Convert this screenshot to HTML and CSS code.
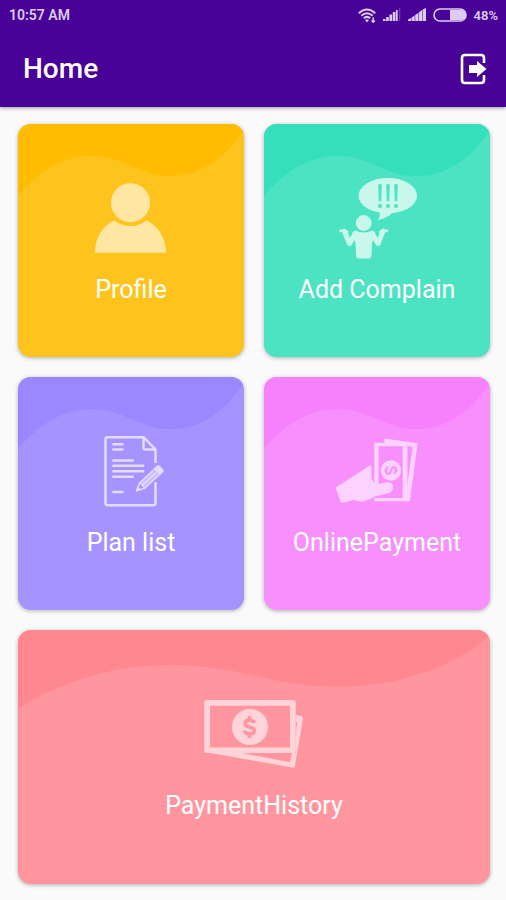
FILE: index.html
```html
<!DOCTYPE html>
<html lang="en">
<head>
<meta charset="utf-8">
<meta name="viewport" content="width=device-width, initial-scale=1">
<title>Home</title>
<link rel="stylesheet" href="styles.css">
</head>
<body>
<header class="header">
  <div class="status">
    <span class="time">10:57 AM</span>
    <div class="status-icons">
      <svg width="18" height="15" viewBox="0 0 18 15" fill="none" stroke="currentColor" stroke-width="2">
        <path d="M.8 5.2Q9-2.2 17.200 5.200"/>
        <path d="M3.300 7.800Q9 2.800 14.700 7.800"/>
        <path d="M5.800 10.300Q9 7.500 12.200 10.300"/>
        <path d="M7 12L9 11.200 11 12 9 14.500Z" fill="currentColor" stroke="none"/>
        <path d="M15.200 9.500v5M13.500 12.500l1.700 1.700 1.700-1.700" stroke-width="1.500"/>
      </svg>
      <svg width="18" height="14" viewBox="0 0 18 14" fill="currentColor">
        <path d="M0 11h2.600v2H0zM3.200 9h2.600v4H3.200zM6.500 6.500h2.600V13H6.500zM9.800 4h2.600v9H9.800zM12.900 2h1.800v11h-1.800z"/>
        <path d="M16.200 0h1v13h-1z" opacity=".35"/>
      </svg>
      <svg width="18" height="14" viewBox="0 0 18 14" fill="currentColor">
        <path d="M0 11.500L3 10v3H0zM3.500 9.500l3.200-2V13H3.500zM7.200 7l3.200-2.300V13H7.200zM10.900 4.300l3.200-2.300V13h-3.200zM14.600 1.600L18 0v13h-3.400z"/>
      </svg>
      <svg width="34" height="14" viewBox="0 0 34 14">
        <rect x="1" y="1" width="32" height="12" rx="6" fill="none" stroke="currentColor" stroke-width="1.600"/>
        <path d="M17 2H28A5 5 0 0 1 28 12H17Z" fill="currentColor"/>
      </svg>
      <span>48%</span>
    </div>
  </div>
  <div class="toolbar">
    <h1 class="title">Home</h1>
    <button class="logout" type="button" aria-label="Log out">
      <svg width="28" height="32" viewBox="0 0 28 32">
        <path d="M24 10V5Q24 2 21 2H5Q2 2 2 5V27Q2 30 5 30H21Q24 30 24 27V22" fill="none" stroke="currentColor" stroke-width="2.600"/>
        <path d="M9 12H17V8L26.500 16 17 24V20H9Z" fill="currentColor"/>
      </svg>
    </button>
  </div>
</header>

<main class="grid">
  <a class="card yellow" href="#profile">
    <svg class="wave" viewBox="0 0 226 233" preserveAspectRatio="none"><path d="M0 0H226V6C207 34 184 52 152 52C120 52 108 32 72 32C45 32 20 48 0 72Z"/></svg>
    <svg class="icon" viewBox="0 0 100 90" fill="currentColor">
      <circle cx="49.500" cy="28.700" r="19.500"/>
      <path d="M14 78.700C14 64 21 52 33.500 46.200Q40 52 49.500 52T65.500 46.200C77.500 52 85 64 85 78.700Z"/>
    </svg>
    <span class="label">Profile</span>
  </a>

  <a class="card teal" href="#complain">
    <svg class="wave" viewBox="0 0 226 233" preserveAspectRatio="none"><path d="M0 0H226V6C207 34 184 52 152 52C120 52 108 32 72 32C45 32 20 48 0 72Z"/></svg>
    <svg class="icon" viewBox="0 0 100 90" fill="currentColor">
      <ellipse cx="60.800" cy="21.700" rx="29.300" ry="17.700"/>
      <path d="M52 37Q54.500 41 50.500 46.300Q61 44 66 38Z"/>
      <g class="cut">
        <path d="M51.200 10.300h3.600L54.200 27h-2.400zM59.200 10.300h3.600L62.200 27h-2.400zM67.200 10.300h3.600L70.200 27h-2.400z"/>
        <circle cx="53" cy="32" r="2"/><circle cx="61" cy="32" r="2"/><circle cx="69" cy="32" r="2"/>
      </g>
      <circle cx="36.700" cy="49" r="7.900"/>
      <path d="M28.500 56.500Q36.700 60.500 45 56.500Q48 57 48.500 60L45 69 44.500 81.500Q44.200 84.500 41.500 84.500H32Q29.200 84.500 29 81.500L28.500 69 25 60Q25.500 57 28.500 56.500Z"/>
      <g fill="none" stroke="currentColor" stroke-linecap="round" stroke-linejoin="round">
        <path d="M18 58.500L22.500 69.500 28 60M55.500 58.500L51 69.500 45.500 60" stroke-width="5"/>
        <path d="M13.500 56.800H18.500M17 56L20 58M60 56.800H55M56.500 56L53.500 58" stroke-width="2.800"/>
      </g>
    </svg>
    <span class="label">Add Complain</span>
  </a>

  <a class="card purple" href="#plans">
    <svg class="wave" viewBox="0 0 226 233" preserveAspectRatio="none"><path d="M0 0H226V6C207 34 184 52 152 52C120 52 108 32 72 32C45 32 20 48 0 72Z"/></svg>
    <svg class="icon" viewBox="0 0 100 90" fill="none" stroke="currentColor" stroke-width="2.500">
      <path d="M74.500 36V22.500L62.500 10.200H26.500Q24.500 10.200 24.500 12.200V76.300Q24.500 78.300 26.500 78.300H72.500Q74.500 78.300 74.500 76.300V55M62.500 10.200V20.500Q62.500 22.500 64.500 22.500H74.500" stroke-linejoin="round"/>
      <path d="M31.300 17.200H42.500M31.300 22.400H42.500M31.300 33.400H52.800M31.300 38.800H63.200M31.300 44.300H63.200M31.300 49.800H52.800M31.300 65H42.500"/>
      <g transform="translate(54.800 64.500) rotate(-43)">
        <path d="M1 0L9-3.800V3.800Z" stroke-width="1.500" stroke-linejoin="round"/>
        <path d="M0 0L5-2.500V2.500Z" fill="currentColor" stroke="none"/>
        <path d="M9-4.300H27.500V4.300H9Z" fill="currentColor" stroke="none" opacity=".55"/>
        <path d="M9-3.600H27.500M9 0H27.500M9 3.600H27.500" stroke-width="1.500"/>
        <path d="M28-4.600H33Q35-4.600 35-2.600V2.600Q35 4.600 33 4.600H28Z" fill="currentColor" stroke="none"/>
      </g>
    </svg>
    <span class="label">Plan list</span>
  </a>

  <a class="card pink" href="#payment">
    <svg class="wave" viewBox="0 0 226 233" preserveAspectRatio="none"><path d="M0 0H226V6C207 34 184 52 152 52C120 52 108 32 72 32C45 32 20 48 0 72Z"/></svg>
    <svg class="icon" viewBox="0 0 100 90" fill="currentColor">
      <path d="M57.500 16V11.500L90.700 16.300 82.800 74.300H79L80 60 85.600 19.800 80.500 19V16Z"/>
      <path fill-rule="evenodd" d="M47.300 15.700H80.500V74.300H47.300V71H75.700V19.200H51.700V58H47.300Z"/>
      <circle cx="64" cy="43.500" r="10.200"/>
      <path class="cut-line" transform="translate(64 43.500) rotate(90) scale(.52)" d="M6.500-6Q5-9.200 0-9.200Q-6-9.200-6-5Q-6-1.500 0 0Q6.500 1.500 6.500 5.200Q6.500 9.200 0 9.200Q-5.500 9.200-6.500 5.500M0-13V-9M0 9V13"/>
      <path d="M8.700 60.500L42.500 38.800Q44.200 38 44.500 40V51.500Q46 54.500 49 57.500L60 55.300Q65.800 54.500 66 59.500Q66.200 64.500 61 66.300L47 69.800Q41 74 34 74.800Q30 73.500 26.500 73L15.500 75.800Q13.800 76 13.300 74.200Z"/>
    </svg>
    <span class="label">OnlinePayment</span>
  </a>

  <a class="card red wide" href="#history">
    <svg class="wave" viewBox="0 0 226 233" preserveAspectRatio="none"><path d="M0 0H226V6C207 34 184 52 152 52C120 52 108 32 72 32C45 32 20 48 0 72Z"/></svg>
    <svg class="icon" viewBox="0 0 100 90" fill="currentColor">
      <path fill-rule="evenodd" d="M3 10H89Q91.700 10 91.700 12.800V60.200Q91.700 63 89 63H3Q.2 63 .2 60.200V12.800Q.2 10 3 10ZM6 15.700V57.500H86V15.700Z"/>
      <path fill-rule="evenodd" d="M1 62L88.500 77.600Q90.500 78 91 75.800L99 28.500Q99.200 26.800 97.500 26.300L91.700 24.800V32L93.300 32.300 91.500 45V63H38L86 72.200 88 62.500H1Z"/>
      <circle cx="46" cy="37" r="18"/>
      <path class="cut-line" transform="translate(45.500 37) scale(.88)" d="M5.500-4.500Q4.500-7.800 0-7.800Q-5-7.800-5-4.200Q-5-1 0 0Q5.500 1.200 5.500 4.500Q5.500 8 0 8Q-5 8-5.800 4.200M0-12.500V-8M0 8V12.500"/>
    </svg>
    <span class="label">PaymentHistory</span>
  </a>
</main>
</body>
</html>
```

FILE: styles.css
```css
* {
  box-sizing: border-box;
}

body {
  margin: 0;
  background: #fafafa;
  font-family: Roboto, "Liberation Sans", sans-serif;
}

.header {
  background: #480297;
  color: #fff;
  box-shadow: 0 1px 4px rgba(0, 0, 0, 0.4);
}

.status {
  display: flex;
  align-items: center;
  justify-content: space-between;
  height: 30px;
  padding: 0 8px 0 9px;
  color: #dccdf0;
  font-size: 13px;
  font-weight: 600;
}

.time {
  font-size: 14px;
}

.status-icons {
  display: flex;
  align-items: center;
  gap: 7px;
}

.toolbar {
  display: flex;
  align-items: center;
  justify-content: space-between;
  height: 77px;
  padding: 0 18px 0 23px;
}

.title {
  margin: 0;
  font-size: 28px;
  font-weight: 500;
  line-height: 34px;
}

.logout {
  display: flex;
  padding: 0;
  border: 0;
  background: none;
  color: #fff;
  cursor: pointer;
}

.grid {
  display: grid;
  grid-template-columns: 1fr 1fr;
  gap: 20px;
  padding: 17px 16px 16px 18px;
}

.card {
  position: relative;
  display: flex;
  flex-direction: column;
  align-items: center;
  justify-content: center;
  gap: 10px;
  min-height: 233px;
  padding-bottom: 2px;
  overflow: hidden;
  border-radius: 13px;
  background: var(--base);
  box-shadow: 0 1px 4px rgba(0, 0, 0, 0.3);
  color: #fff;
  text-decoration: none;
}

.wide {
  grid-column: 1 / -1;
  min-height: 254px;
}

.wave {
  position: absolute;
  inset: 0;
  width: 100%;
  height: 100%;
  fill: var(--wave);
}

.icon {
  position: relative;
  width: 100px;
  height: 90px;
  color: var(--icon);
}

.cut {
  fill: var(--base);
}

.cut-line {
  fill: none;
  stroke: var(--base);
  stroke-width: 4;
}

.label {
  position: relative;
  font-size: 25px;
  line-height: 32px;
}

.yellow {
  --base: #fec41d;
  --wave: #ffbc03;
  --icon: #ffe6a3;
}

.teal {
  --base: #4be3c2;
  --wave: #35dfbb;
  --icon: #c9f7ec;
}

.purple {
  --base: #a593ff;
  --wave: #9b87ff;
  --icon: #e3dcff;
}

.pink {
  --base: #f78ffc;
  --wave: #f780fc;
  --icon: #fcd2fe;
}

.red {
  --base: #ff969f;
  --wave: #ff8890;
  --icon: #ffd3d8;
}
```
